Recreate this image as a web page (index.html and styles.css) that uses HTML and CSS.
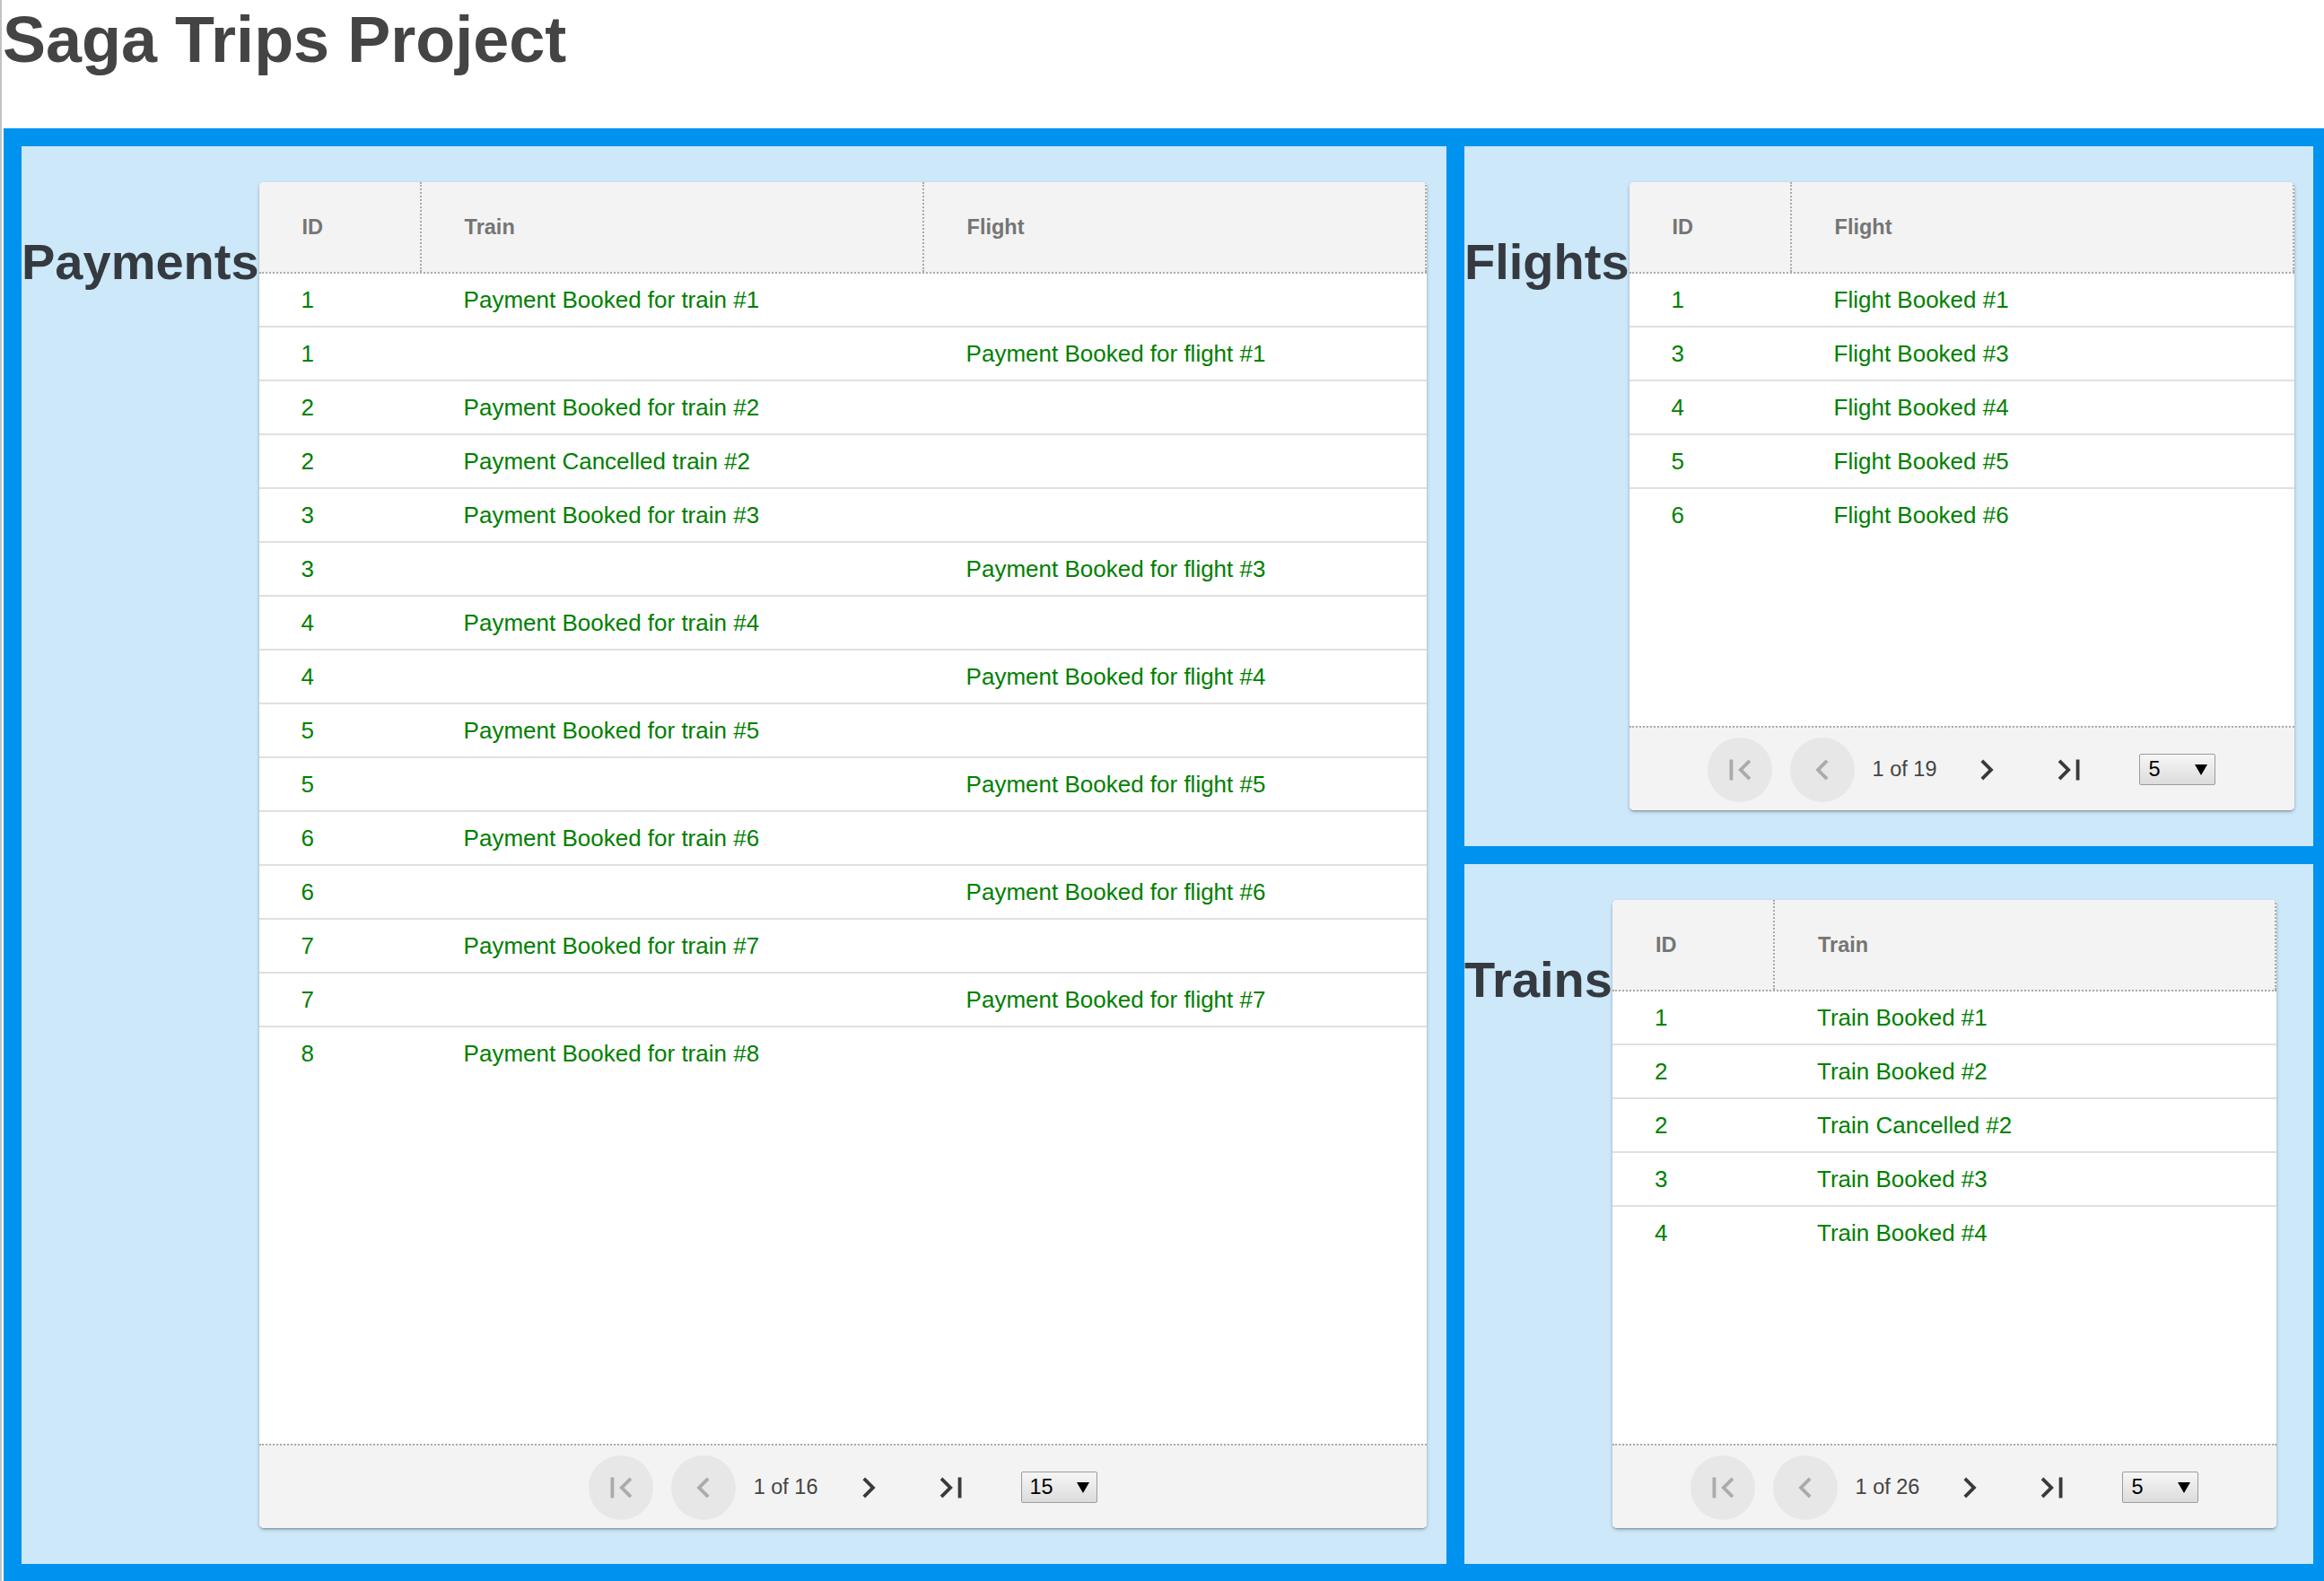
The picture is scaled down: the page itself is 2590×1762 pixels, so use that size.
FILE: index.html
```html
<!DOCTYPE html>
<html lang="en">
<head>
<meta charset="utf-8">
<title>Saga Trips Project</title>
<link rel="stylesheet" href="styles.css">
</head>
<body>
<div class="page">
  <h1 class="title">Saga Trips Project</h1>
  <div class="board">
    <section class="panel panel--payments">
      <h2 class="panel-title">Payments</h2>
      <div class="card card--wide">
        <div class="thead cols-3">
          <div class="th">ID</div><div class="th">Train</div><div class="th">Flight</div>
        </div>
        <div class="tbody">
          <div class="tr cols-3"><div class="td">1</div><div class="td">Payment Booked for train #1</div><div class="td"></div></div>
          <div class="tr cols-3"><div class="td">1</div><div class="td"></div><div class="td">Payment Booked for flight #1</div></div>
          <div class="tr cols-3"><div class="td">2</div><div class="td">Payment Booked for train #2</div><div class="td"></div></div>
          <div class="tr cols-3"><div class="td">2</div><div class="td">Payment Cancelled train #2</div><div class="td"></div></div>
          <div class="tr cols-3"><div class="td">3</div><div class="td">Payment Booked for train #3</div><div class="td"></div></div>
          <div class="tr cols-3"><div class="td">3</div><div class="td"></div><div class="td">Payment Booked for flight #3</div></div>
          <div class="tr cols-3"><div class="td">4</div><div class="td">Payment Booked for train #4</div><div class="td"></div></div>
          <div class="tr cols-3"><div class="td">4</div><div class="td"></div><div class="td">Payment Booked for flight #4</div></div>
          <div class="tr cols-3"><div class="td">5</div><div class="td">Payment Booked for train #5</div><div class="td"></div></div>
          <div class="tr cols-3"><div class="td">5</div><div class="td"></div><div class="td">Payment Booked for flight #5</div></div>
          <div class="tr cols-3"><div class="td">6</div><div class="td">Payment Booked for train #6</div><div class="td"></div></div>
          <div class="tr cols-3"><div class="td">6</div><div class="td"></div><div class="td">Payment Booked for flight #6</div></div>
          <div class="tr cols-3"><div class="td">7</div><div class="td">Payment Booked for train #7</div><div class="td"></div></div>
          <div class="tr cols-3"><div class="td">7</div><div class="td"></div><div class="td">Payment Booked for flight #7</div></div>
          <div class="tr cols-3"><div class="td">8</div><div class="td">Payment Booked for train #8</div><div class="td"></div></div>
        </div>
        <div class="tfoot">
          <div class="pbtn pbtn--off"><svg viewBox="0 0 24 24"><path d="M18.41 16.59L13.82 12l4.59-4.59L17 6l-6 6 6 6zM6 6h2v12H6z"/></svg></div>
          <div class="pbtn pbtn--off"><svg viewBox="0 0 24 24"><path d="M15.41 7.41L14 6l-6 6 6 6 1.41-1.41L10.83 12z"/></svg></div>
          <span class="pinfo">1 of 16</span>
          <div class="pbtn"><svg viewBox="0 0 24 24"><path d="M10 6L8.59 7.41 13.17 12l-4.58 4.59L10 18l6-6z"/></svg></div>
          <div class="pbtn"><svg viewBox="0 0 24 24"><path d="M5.59 7.41L10.18 12l-4.59 4.59L7 18l6-6-6-6zM16 6h2v12h-2z"/></svg></div>
          <div class="psel"><span>15</span><svg class="psel-arrow" viewBox="0 0 14 12"><polygon points="0,0 14,0 7,12"/></svg></div>
        </div>
      </div>
    </section>

    <section class="panel panel--flights">
      <h2 class="panel-title">Flights</h2>
      <div class="card card--narrow">
        <div class="thead cols-2">
          <div class="th">ID</div><div class="th">Flight</div>
        </div>
        <div class="tbody">
          <div class="tr cols-2"><div class="td">1</div><div class="td">Flight Booked #1</div></div>
          <div class="tr cols-2"><div class="td">3</div><div class="td">Flight Booked #3</div></div>
          <div class="tr cols-2"><div class="td">4</div><div class="td">Flight Booked #4</div></div>
          <div class="tr cols-2"><div class="td">5</div><div class="td">Flight Booked #5</div></div>
          <div class="tr cols-2"><div class="td">6</div><div class="td">Flight Booked #6</div></div>
        </div>
        <div class="tfoot">
          <div class="pbtn pbtn--off"><svg viewBox="0 0 24 24"><path d="M18.41 16.59L13.82 12l4.59-4.59L17 6l-6 6 6 6zM6 6h2v12H6z"/></svg></div>
          <div class="pbtn pbtn--off"><svg viewBox="0 0 24 24"><path d="M15.41 7.41L14 6l-6 6 6 6 1.41-1.41L10.83 12z"/></svg></div>
          <span class="pinfo">1 of 19</span>
          <div class="pbtn"><svg viewBox="0 0 24 24"><path d="M10 6L8.59 7.41 13.17 12l-4.58 4.59L10 18l6-6z"/></svg></div>
          <div class="pbtn"><svg viewBox="0 0 24 24"><path d="M5.59 7.41L10.18 12l-4.59 4.59L7 18l6-6-6-6zM16 6h2v12h-2z"/></svg></div>
          <div class="psel"><span>5</span><svg class="psel-arrow" viewBox="0 0 14 12"><polygon points="0,0 14,0 7,12"/></svg></div>
        </div>
      </div>
    </section>

    <section class="panel panel--trains">
      <h2 class="panel-title">Trains</h2>
      <div class="card card--narrow card--trains">
        <div class="thead cols-2">
          <div class="th">ID</div><div class="th">Train</div>
        </div>
        <div class="tbody">
          <div class="tr cols-2"><div class="td">1</div><div class="td">Train Booked #1</div></div>
          <div class="tr cols-2"><div class="td">2</div><div class="td">Train Booked #2</div></div>
          <div class="tr cols-2"><div class="td">2</div><div class="td">Train Cancelled #2</div></div>
          <div class="tr cols-2"><div class="td">3</div><div class="td">Train Booked #3</div></div>
          <div class="tr cols-2"><div class="td">4</div><div class="td">Train Booked #4</div></div>
        </div>
        <div class="tfoot">
          <div class="pbtn pbtn--off"><svg viewBox="0 0 24 24"><path d="M18.41 16.59L13.82 12l4.59-4.59L17 6l-6 6 6 6zM6 6h2v12H6z"/></svg></div>
          <div class="pbtn pbtn--off"><svg viewBox="0 0 24 24"><path d="M15.41 7.41L14 6l-6 6 6 6 1.41-1.41L10.83 12z"/></svg></div>
          <span class="pinfo">1 of 26</span>
          <div class="pbtn"><svg viewBox="0 0 24 24"><path d="M10 6L8.59 7.41 13.17 12l-4.58 4.59L10 18l6-6z"/></svg></div>
          <div class="pbtn"><svg viewBox="0 0 24 24"><path d="M5.59 7.41L10.18 12l-4.59 4.59L7 18l6-6-6-6zM16 6h2v12h-2z"/></svg></div>
          <div class="psel"><span>5</span><svg class="psel-arrow" viewBox="0 0 14 12"><polygon points="0,0 14,0 7,12"/></svg></div>
        </div>
      </div>
    </section>
  </div>
</div>
</body>
</html>
```
FILE: styles.css
```css
html, body {
  margin: 0;
  padding: 0;
  overflow: hidden;
  background: #ffffff;
}

body {
  font-family: "Liberation Sans", Arial, sans-serif;
}

.page {
  border-left: 2px solid #c2c2c2;
  min-height: 1762px;
  box-sizing: border-box;
}

.title {
  margin: 0 0 63px 0;
  padding: 8px 0 0 1px;
  font-size: 72px;
  line-height: 72px;
  font-weight: 700;
  color: #444444;
}

.board {
  margin-left: 2px;
  width: max-content;
  display: grid;
  grid-template-columns: 1588px 946px;
  grid-template-rows: 780px 780px;
  gap: 20px;
  padding: 20px;
  background: #0092ef;
}

.panel {
  background: #cce8f9;
  display: flex;
  align-items: stretch;
}

.panel--payments {
  grid-column: 1;
  grid-row: 1 / span 2;
}

.panel--flights {
  grid-column: 2;
  grid-row: 1;
}

.panel--trains {
  grid-column: 2;
  grid-row: 2;
}

.panel-title {
  align-self: flex-start;
  margin: 101px 0 0 0;
  font-size: 56px;
  line-height: 56px;
  font-weight: 700;
  color: #343a40;
  white-space: nowrap;
}

.card {
  margin: 40px 0;
  background: #ffffff;
  border-radius: 5px;
  overflow: hidden;
  display: flex;
  flex-direction: column;
  box-shadow: 0 2px 4px rgba(0, 0, 0, 0.2), 0 1px 2px rgba(0, 0, 0, 0.14), 0 3px 2px -2px rgba(0, 0, 0, 0.12);
}

.card--wide {
  width: 1301px;
}

.card--narrow {
  width: 741px;
}

.card--trains {
  width: 740px;
}

.cols-3 {
  display: grid;
  grid-template-columns: 181px 1fr 1fr;
}

.cols-2 {
  display: grid;
  grid-template-columns: 181px 1fr;
}

.thead {
  box-sizing: border-box;
  height: 102px;
  background: #f3f3f3;
  border-bottom: 2px dotted #ababab;
}

.th {
  display: flex;
  align-items: center;
  padding-left: 48px;
  border-right: 2px dotted #ababab;
  font-size: 23.5px;
  font-weight: 700;
  color: #757575;
}

.tbody {
  flex: 1;
}

.tr {
  box-sizing: border-box;
  height: 58px;
  padding-top: 1px;
}

.tr + .tr {
  height: 60px;
  border-top: 2px solid #e0e0e0;
}

.td {
  display: flex;
  align-items: center;
  padding-left: 47px;
  font-size: 26px;
  color: #008000;
  white-space: nowrap;
}

.tfoot {
  box-sizing: border-box;
  height: 94px;
  background: #f3f3f3;
  border-top: 2px dotted #ababab;
  display: flex;
  align-items: center;
  justify-content: center;
  gap: 20px;
  padding-top: 1px;
}

.pbtn {
  width: 72px;
  height: 72px;
  border-radius: 50%;
  display: flex;
  align-items: center;
  justify-content: center;
  color: #3a3a3a;
}

.pbtn svg {
  width: 46px;
  height: 46px;
  fill: currentColor;
}

.pbtn--off {
  background: #e7e7e7;
  color: #ababab;
}

.pinfo {
  font-size: 23.5px;
  color: #444444;
  white-space: nowrap;
}

.psel {
  margin-left: 22px;
  box-sizing: border-box;
  width: 85px;
  height: 35px;
  border: 1px solid #9c9c9c;
  border-radius: 2px;
  background: linear-gradient(#f6f6f6, #dcdcdc);
  display: flex;
  align-items: center;
  justify-content: space-between;
  padding: 0 8px 0 9px;
  font-size: 23.5px;
  color: #000000;
}

.psel-arrow {
  width: 14px;
  height: 12px;
  fill: #000000;
}
```
